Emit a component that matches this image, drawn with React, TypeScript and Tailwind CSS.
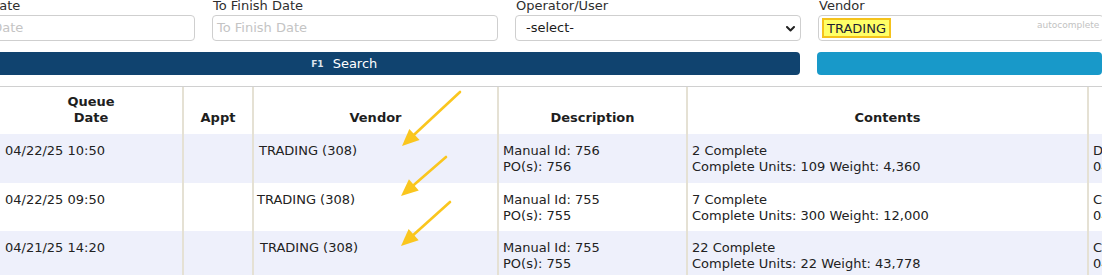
import React from "react";

const FONT = { fontFamily: '"DejaVu Sans", Verdana, sans-serif' };

type Row = {
  date: string;
  vendorPad: string;
  desc: [string, string];
  contents: [string, string];
  last: [string, string];
  bg: string;
  h: string;
};

const rows: Row[] = [
  {
    date: "04/22/25 10:50",
    vendorPad: "pl-[5px]",
    desc: ["Manual Id: 756", "PO(s): 756"],
    contents: ["2 Complete", "Complete Units: 109 Weight: 4,360"],
    last: ["D", "04"],
    bg: "bg-[#eef0fb]",
    h: "h-[49px]",
  },
  {
    date: "04/22/25 09:50",
    vendorPad: "pl-[3px]",
    desc: ["Manual Id: 755", "PO(s): 755"],
    contents: ["7 Complete", "Complete Units: 300 Weight: 12,000"],
    last: ["C", "04"],
    bg: "bg-white",
    h: "h-[48px]",
  },
  {
    date: "04/21/25 14:20",
    vendorPad: "pl-[6px]",
    desc: ["Manual Id: 755", "PO(s): 755"],
    contents: ["22 Complete", "Complete Units: 22 Weight: 43,778"],
    last: ["C", "04"],
    bg: "bg-[#eef0fb]",
    h: "h-[48px]",
  },
];

function Arrow({ x1, y1, x2, y2 }: { x1: number; y1: number; x2: number; y2: number }) {
  const dx = x2 - x1;
  const dy = y2 - y1;
  const len = Math.hypot(dx, dy);
  const ux = dx / len;
  const uy = dy / len;
  const hl = 17;
  const hw = 7.5;
  const bx = x2 - ux * hl;
  const by = y2 - uy * hl;
  const px = -uy * hw;
  const py = ux * hw;
  return (
    <g>
      <line x1={x1} y1={y1} x2={bx + ux * 2} y2={by + uy * 2} stroke="#fac61e" strokeWidth={2.6} strokeLinecap="round" />
      <polygon points={`${x2},${y2} ${bx + px},${by + py} ${bx - px},${by - py}`} fill="#fac61e" />
    </g>
  );
}

const cellBorder = "border-l-2 border-[#e5e1d4]";

export default function App() {
  return (
    <div className="relative w-[1102px] h-[275px] overflow-hidden bg-white text-[13px] text-[#222]" style={FONT}>
      {/* Filter fields */}
      <div className="ml-[-91px] mt-[-2px] flex gap-[17px]">
        <div className="w-[286px] shrink-0">
          <div className="h-[17px] leading-[16px] pl-[8px] text-[#2e2e2e]">From Start Date</div>
          <div className="h-[26px] rounded-[4px] border border-[#cfcfcf] bg-white pl-[10px] flex items-center text-[#c4c4c4]">
            From Start Date
          </div>
        </div>
        <div className="w-[286px] shrink-0">
          <div className="h-[17px] leading-[16px] pl-[1px] text-[#2e2e2e]">To Finish Date</div>
          <div className="h-[26px] rounded-[4px] border border-[#cfcfcf] bg-white pl-[4px] flex items-center text-[#c4c4c4]">
            To Finish Date
          </div>
        </div>
        <div className="w-[286px] shrink-0">
          <div className="h-[17px] leading-[16px] pl-[1px] text-[#2e2e2e]">Operator/User</div>
          <div className="h-[26px] rounded-[4px] border border-[#cfcfcf] bg-white pl-[10px] pr-[5px] flex items-center justify-between text-[#1a1a1a]">
            <span>-select-</span>
            <svg width="9" height="6" viewBox="0 0 9 6" className="mt-[1px]">
              <path d="M1 1 L4.5 4.5 L8 1" fill="none" stroke="#222" strokeWidth="2" strokeLinecap="round" strokeLinejoin="round" />
            </svg>
          </div>
        </div>
        <div className="w-[286px] shrink-0">
          <div className="h-[17px] leading-[16px] pl-[1px] text-[#2e2e2e]">Vendor</div>
          <div className="relative h-[26px] rounded-[4px] border border-[#cfcfcf] bg-white pl-[3px] flex items-center">
            <span className="h-[20px] leading-[17px] px-[3px] border-2 border-[#f4c21b] bg-[#ffff66] text-[#1d1d33]">TRADING</span>
            <span className="absolute left-[218px] top-[3px] text-[9px] text-[#c2c2c2]">autocomplete</span>
          </div>
        </div>
      </div>

      {/* Buttons */}
      <div className="ml-[-91px] mt-[11px] flex gap-[17px]">
        <div className="w-[892px] h-[23px] rounded-[4px] bg-[#10436f] text-white flex items-center justify-center pr-[20px] gap-[9px]">
          <span className="text-[9px] font-bold text-[#dde4ee] mt-[2px]">F1</span>
          <span className="text-[13px]">Search</span>
        </div>
        <div className="w-[286px] h-[23px] rounded-[4px] bg-[#1899c9]" />
      </div>

      {/* Table */}
      <div className="mt-[11px] border-t border-[#d0d0d0]">
        <div className="flex h-[47px] font-bold text-[#1e1e1e] leading-[16px]">
          <div className="w-[182px] shrink-0 flex flex-col items-center justify-end pb-[8px] text-center">
            <span>Queue</span>
            <span>Date</span>
          </div>
          <div className={`w-[70px] shrink-0 ${cellBorder} flex items-end justify-center pb-[8px]`}>Appt</div>
          <div className={`w-[245px] shrink-0 ${cellBorder} flex items-end justify-center pb-[8px]`}>Vendor</div>
          <div className={`w-[189px] shrink-0 ${cellBorder} flex items-end justify-center pb-[8px]`}>Description</div>
          <div className={`w-[401px] shrink-0 ${cellBorder} flex items-end justify-center pb-[8px]`}>Contents</div>
          <div className={`flex-1 ${cellBorder}`} />
        </div>
        {rows.map((r, i) => (
          <div key={i} className={`flex ${r.h} ${r.bg} leading-[16px]`}>
            <div className="w-[182px] shrink-0 pl-[5px] pt-[9px]">{r.date}</div>
            <div className={`w-[70px] shrink-0 ${cellBorder}`} />
            <div className={`w-[245px] shrink-0 ${cellBorder} ${r.vendorPad} pt-[9px]`}>TRADING (308)</div>
            <div className={`w-[189px] shrink-0 ${cellBorder} pl-[4px] pt-[9px]`}>
              <div>{r.desc[0]}</div>
              <div>{r.desc[1]}</div>
            </div>
            <div className={`w-[401px] shrink-0 ${cellBorder} pl-[4px] pt-[9px]`}>
              <div>{r.contents[0]}</div>
              <div>{r.contents[1]}</div>
            </div>
            <div className={`flex-1 ${cellBorder} pl-[4px] pt-[9px]`}>
              <div>{r.last[0]}</div>
              <div>{r.last[1]}</div>
            </div>
          </div>
        ))}
      </div>

      {/* Annotation arrows */}
      <svg className="absolute left-0 top-0 pointer-events-none" width="1102" height="275">
        <Arrow x1={460} y1={92} x2={402} y2={146} />
        <Arrow x1={446} y1={157} x2={401} y2={196} />
        <Arrow x1={450} y1={202} x2={401} y2={246} />
      </svg>
    </div>
  );
}
